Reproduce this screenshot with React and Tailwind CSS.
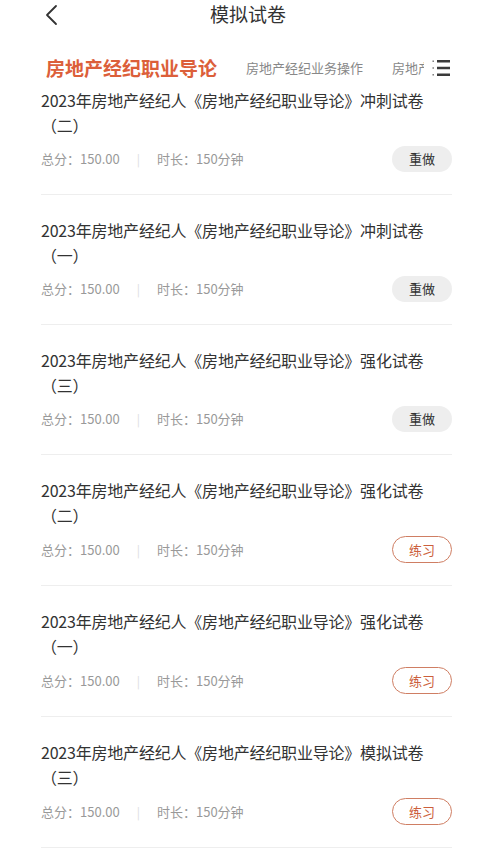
import { useState } from 'react';

const tabs = ['房地产经纪职业导论', '房地产经纪业务操作', '房地产经纪专业基础'];

const papers = [
  { title: '2023年房地产经纪人《房地产经纪职业导论》冲刺试卷（二）', done: true },
  { title: '2023年房地产经纪人《房地产经纪职业导论》冲刺试卷（一）', done: true },
  { title: '2023年房地产经纪人《房地产经纪职业导论》强化试卷（三）', done: true },
  { title: '2023年房地产经纪人《房地产经纪职业导论》强化试卷（二）', done: false },
  { title: '2023年房地产经纪人《房地产经纪职业导论》强化试卷（一）', done: false },
  { title: '2023年房地产经纪人《房地产经纪职业导论》模拟试卷（三）', done: false },
];

const MenuIcon = () => (
  <svg width="18" height="20" viewBox="0 0 18 20" fill="none">
    <rect x="0.5" y="2.5" width="1.4" height="1.4" fill="#666" />
    <rect x="0.5" y="9.3" width="1.4" height="1.4" fill="#666" />
    <rect x="0.5" y="16.1" width="1.4" height="1.4" fill="#666" />
    <path d="M5 3.2h13M5 10h13M5 16.8h13" stroke="#3a3a3a" strokeWidth="2.4" />
  </svg>
);

const App = () => {
  const [active, setActive] = useState(0);

  return (
    <div
      className="w-[496px] h-[865px] bg-white overflow-hidden"
      style={{ fontFamily: '"Noto Sans CJK SC", "Noto Sans", sans-serif' }}
    >
      {/* Header */}
      <div className="relative h-[27px] flex items-center justify-center">
        <button className="absolute left-[44px] top-[4px] p-0">
          <svg width="16" height="22" viewBox="0 0 16 22" fill="none">
            <path d="M12 2L3 11l9 9" stroke="#333" strokeWidth="1.8" strokeLinecap="round" strokeLinejoin="round" />
          </svg>
        </button>
        <h1 className="text-[19px] text-[#333] leading-none">模拟试卷</h1>
      </div>

      {/* Tabs */}
      <div className="flex items-center h-[40px] mt-[21px] pl-[46px] pr-[46px]">
        <div className="flex-1 min-w-0 flex items-center gap-[29px] overflow-hidden whitespace-nowrap">
          {tabs.map((t, i) => (
            <button
              key={t}
              onClick={() => setActive(i)}
              className={
                i === active
                  ? 'shrink-0 text-[19px] font-bold text-[#dc5f3a]'
                  : 'shrink-0 text-[13px] text-[#888]'
              }
            >
              {t}
            </button>
          ))}
        </div>
        <div className="shrink-0 pl-[8px] bg-white flex items-center">
          <MenuIcon />
        </div>
      </div>

      {/* Paper list */}
      <div className="pl-[41px] pr-[44px]">
        {papers.map((p, i) => (
          <div
            key={p.title}
            className={`border-b border-[#eeeeee] pb-[22px] ${i === 0 ? 'pt-0' : 'pt-[23px]'}`}
          >
            <div className="text-[16px] leading-[25px] tracking-[-0.2px] text-[#333]">{p.title}</div>
            <div className="flex items-center mt-[8px]">
              <div className="flex-1 flex items-center text-[13px] text-[#999]">
                <span>总分：150.00</span>
                <span className="mx-[17px] text-[#ddd] text-[12px]">|</span>
                <span>时长：150分钟</span>
              </div>
              {p.done ? (
                <button className="w-[60px] h-[26px] rounded-full bg-[#eeeeee] text-[13px] text-[#333]">
                  重做
                </button>
              ) : (
                <button className="w-[60px] h-[27px] rounded-full border border-[#cf7e63] text-[13px] text-[#cc5f3d]">
                  练习
                </button>
              )}
            </div>
          </div>
        ))}
      </div>
    </div>
  );
};

export default App;
